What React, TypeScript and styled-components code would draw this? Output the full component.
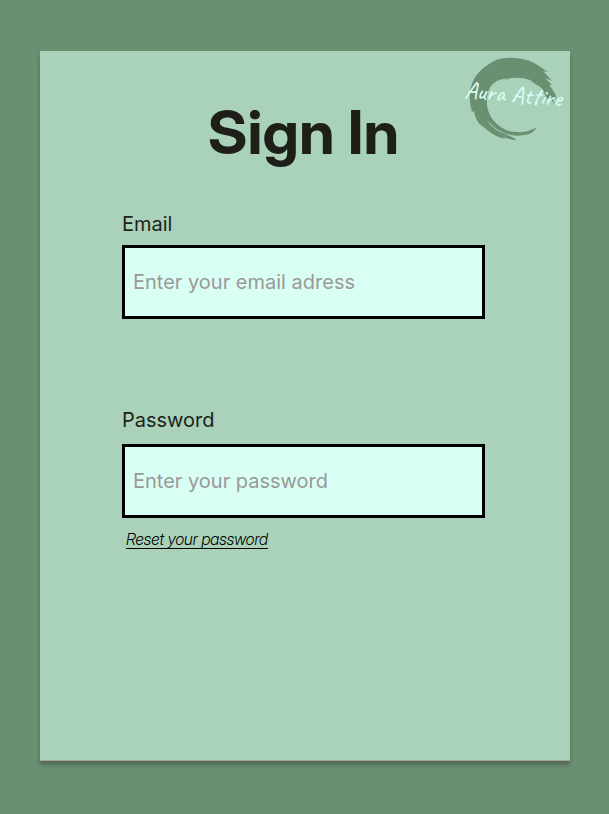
import React from "react";
import styled, { createGlobalStyle } from "styled-components";

const GlobalStyle = createGlobalStyle`
  *, *::before, *::after { box-sizing: border-box; }
  body {
    margin: 0;
    background: #6b8f71;
    color: #1f1f1a;
    font-family: Inter, "Liberation Sans", sans-serif;
  }
`;

const Page = styled.div`
  display: flex;
  min-height: 100vh;
  padding: 51px 39px 53px 40px;
`;

const Card = styled.main`
  position: relative;
  flex: 1;
  min-width: 0;
  padding: 45px 85px 48px 82px;
  background: #aad2ba;
  border-bottom: 1px solid #a8a498;
  box-shadow: 0 4px 4px rgba(0, 0, 0, 0.25);
`;

const Logo = styled.svg`
  position: absolute;
  top: 0;
  right: 0;
  width: 115px;
  height: 99px;
  overflow: visible;
`;

const LogoText = styled.text`
  fill: #d9fff5;
  font-family: Caveat, Lato, sans-serif;
  font-size: 25px;
`;

const Title = styled.h1`
  margin: 0 0 44px;
  font-family: "Inter Display", Inter, sans-serif;
  font-size: 61px;
  line-height: 72px;
  font-weight: 700;
  text-align: center;
`;

const Form = styled.form`
  display: flex;
  flex-direction: column;
  gap: 89px;
`;

const Field = styled.div<{ $gap: number }>`
  display: flex;
  flex-direction: column;
  gap: ${({ $gap }) => $gap}px;
`;

const Label = styled.label`
  font-size: 20px;
  line-height: 24px;
  font-weight: 400;
`;

const Input = styled.input`
  width: 100%;
  height: 74px;
  padding: 0 8px;
  border: 3px solid #000;
  border-radius: 0;
  background: #d9fff5;
  color: #1f1f1a;
  font-family: inherit;
  font-size: 20px;
  font-weight: 400;

  &::placeholder {
    color: #999;
    opacity: 1;
  }
`;

const ResetLink = styled.a`
  align-self: flex-start;
  margin-left: 4px;
  border-bottom: 1px solid #000;
  color: #000;
  font-family: "Inter Display", Inter, sans-serif;
  font-size: 16px;
  font-weight: 300;
  line-height: 18px;
  font-style: italic;
  text-decoration: none;
`;

function BrandLogo() {
  return (
    <Logo viewBox="0 0 115 99" role="img" aria-label="Aura Attire">
      <path
        fill="#6b8f71"
        d="M99 53 L96 48 L95 50 Q90 46 89 41 Q87 37 84 35 L80 33 L75 29
          Q66 26 56 27 L48 30 L54 27 L44 29 L47 28 Q36 31 33 41
          Q29 57 38 69 Q48 81 62 81 Q73 82 82 76 Q77 84 69 84
          Q53 87 39 76 L32 69 Q38 79 50 83 L61 88 L60 89
          Q52 88 46 85 L51 88 Q40 86 31 78 L25 73 L26 75
          Q20 68 19 60 L17 61 Q14 51 15 42 C16 31 21 22 31 15
          Q43 5 60 7 Q75 8 84 15 L93 21 L88 20 L97 30 L90 27
          L97 34 L94 34 Q101 42 102 49 L98 46 Z"
      />
      <LogoText x="9" y="47" transform="rotate(5 9 47)">Aura Attire</LogoText>
    </Logo>
  );
}

export default function App() {
  return (
    <>
      <GlobalStyle />
      <Page>
        <Card>
          <BrandLogo />
          <Title>Sign In</Title>
          <Form>
            <Field $gap={9}>
              <Label htmlFor="email">Email</Label>
              <Input id="email" type="email" placeholder="Enter your email adress" />
            </Field>
            <Field $gap={12}>
              <Label htmlFor="password">Password</Label>
              <Input id="password" type="password" placeholder="Enter your password" />
              <ResetLink href="#reset">Reset your password</ResetLink>
            </Field>
          </Form>
        </Card>
      </Page>
    </>
  );
}
